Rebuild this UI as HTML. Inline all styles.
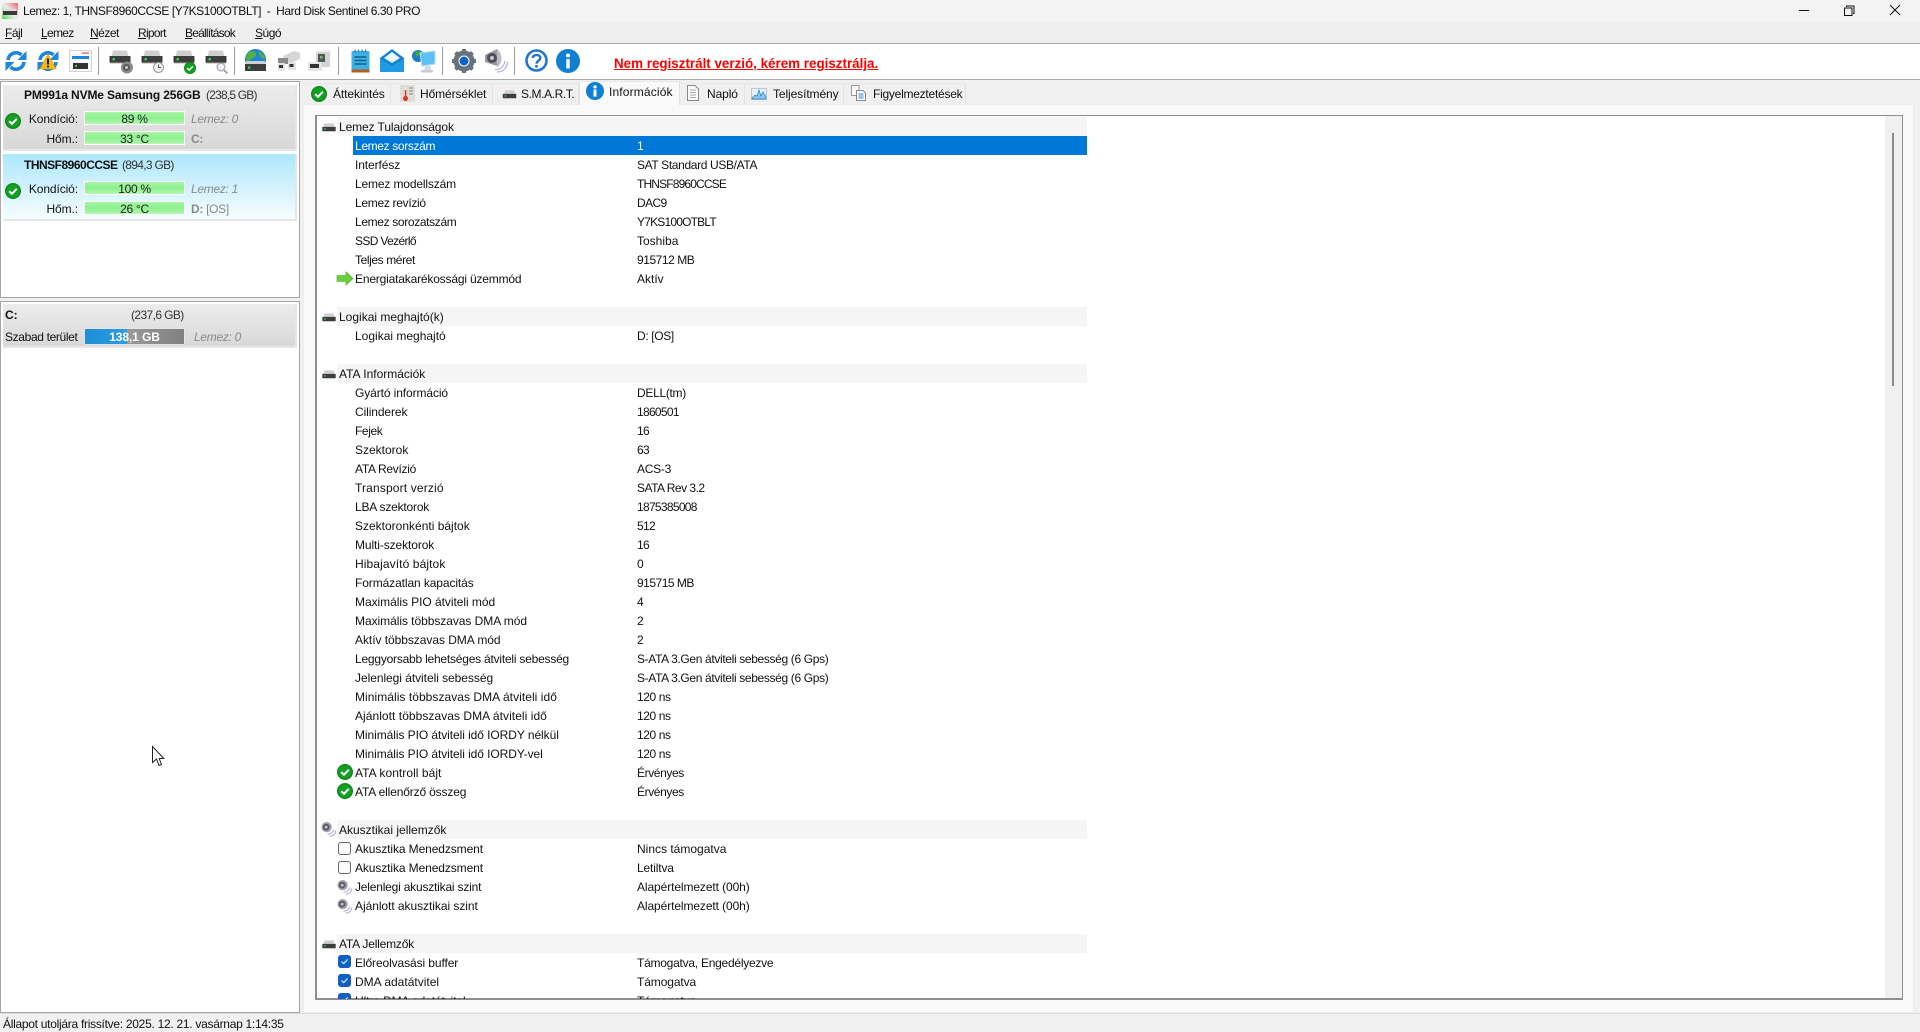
<!DOCTYPE html>
<html lang="hu"><head><meta charset="utf-8"><title>Hard Disk Sentinel</title>
<style>
*{box-sizing:border-box}
html,body{margin:0;padding:0;width:1920px;height:1032px;overflow:hidden;background:#f0f0f0}
body{position:relative;font:12px/21px "Liberation Sans",sans-serif;color:#111;letter-spacing:-.1px}
.a{position:absolute;white-space:nowrap}
svg{position:absolute;overflow:visible}
u{text-decoration:underline}
.m{letter-spacing:-.5px}
.lbl{text-align:right;width:78px;left:0}
.bar{position:absolute;left:85px;width:99px;height:12px;background:linear-gradient(#a8f7a8,#8cf08c 50%,#b6f7b6);outline:1px solid #fff;text-align:center;line-height:14px;color:#222;letter-spacing:-.3px}
.g{color:#8a8a8a;letter-spacing:-.3px}
.tab{position:absolute;top:83px;height:21px;background:#f0f0f0;border-right:1px solid #e2e2e2;border-top:1px solid #e8e8e8}
#t{position:absolute;left:0;top:117px;width:1088px;height:882px;overflow:hidden}
.r{position:relative;height:19px;line-height:21px;white-space:nowrap}
.r b{position:absolute;left:355px;font-weight:normal}
.r i{position:absolute;left:637px;font-style:normal}
.h{position:relative;height:19px;line-height:21px;margin-left:337px;width:750px;background:#f5f5f5}
.h b{position:absolute;left:2px;font-weight:normal}
.s{background:linear-gradient(#0078d7,#0078d7) 353px 0/734px 19px no-repeat;color:#fff}
.cb{position:absolute;left:338px;top:3px;width:13px;height:13px;border-radius:3px;border:1px solid #666;background:#fbfbfb}
.cb.on{top:2px;background:#0f5fc4;border-color:#0f5fc4}
.n{letter-spacing:-.7px}
.c{letter-spacing:-.85px}
.q{letter-spacing:-.35px}
.z{letter-spacing:0}
.y{letter-spacing:.1px}
</style></head><body>
<svg width="0" height="0" style="position:absolute"><defs>
<linearGradient id="ic" x1="1" y1="0" x2="0" y2="1"><stop offset="0" stop-color="#f0626a"/><stop offset=".5" stop-color="#eee"/><stop offset="1" stop-color="#55dd55"/></linearGradient>
<symbol id="hd" viewBox="0 0 22 14"><path d="M2.500 6 4 0.500H18L19.500 6Z" fill="#cfcfcf"/><rect x="0.500" y="6" width="21" height="6.500" fill="#3d3d3d"/><rect x="3.500" y="8" width="2.400" height="2.400" fill="#2fd24a"/><rect x="1" y="12.500" width="20" height="1" fill="#aaa"/></symbol>
<symbol id="ok" viewBox="0 0 16 16"><circle cx="8" cy="8" r="8" fill="#0d8a18"/><circle cx="8" cy="8" r="6.600" fill="#13a024"/><path d="M4.200 8.200 7 10.700 11.800 5.800" fill="none" stroke="#fff" stroke-width="2"/></symbol>
<symbol id="sp" viewBox="0 0 16 16"><circle cx="6" cy="6" r="5.500" fill="#a2a2aa"/><circle cx="5.500" cy="6" r="3.600" fill="#5b5b64"/><circle cx="5.500" cy="6" r="1.500" fill="#c8c8d0"/><path d="M7 13.500C10.500 13.500 13 11.500 13.500 8.500M9.500 15.500C13 15.500 15.300 13 15.800 9.500" fill="none" stroke="#adade0" stroke-width="1.200"/></symbol>
<symbol id="rf" viewBox="0 0 22 22"><path d="M3 10A8 8 0 0 1 16.500 5" fill="none" stroke="#1c86d8" stroke-width="3.600"/><path d="M21.500 1V10H12.500Z" fill="#1c86d8"/><path d="M19 12A8 8 0 0 1 5.500 17" fill="none" stroke="#1c86d8" stroke-width="3.600"/><path d="M0.500 21V12H9.500Z" fill="#1c86d8"/></symbol>
<symbol id="ck" viewBox="0 0 13 13"><path d="M3.500 6.500 5.700 8.600 9.600 4.400" fill="none" stroke="#dbe9ff" stroke-width="1.200"/></symbol>
</defs></svg>

<!-- title bar -->
<div class="a" style="left:0;top:0;width:1920px;height:22px;background:#f3f3f3"></div>
<div class="a" style="left:0;top:22px;width:1920px;height:21px;background:#efefef"></div>
<svg style="left:2px;top:3px" width="16" height="16" viewBox="0 0 16 16"><rect width="16" height="16" fill="url(#ic)"/><rect x="1" y="8" width="14" height="4" fill="#3a3a3a"/><rect x="2" y="6" width="12" height="2" fill="#ddd"/></svg>
<div class="a" style="left:23px;top:1px;letter-spacing:-.43px">Lemez: 1, THNSF8960CCSE [Y7KS100OTBLT] &nbsp;-&nbsp; Hard Disk Sentinel 6.30 PRO</div>
<svg style="left:1799px;top:10px" width="10" height="1"><rect width="10" height="1" fill="#111"/></svg>
<svg style="left:1844px;top:5px" width="11" height="11" viewBox="0 0 11 11"><path d="M2.500 2V1H10V8.500H9M0.500 3H8V10.500H0.500Z" fill="none" stroke="#111"/></svg>
<svg style="left:1890px;top:5px" width="10" height="10" viewBox="0 0 10 10"><path d="M0 0 10 10M10 0 0 10" stroke="#111" stroke-width="1"/></svg>

<!-- menu -->
<div class="a m" style="left:5px;top:23px"><u>F</u>ájl</div>
<div class="a m" style="left:41px;top:23px;letter-spacing:-.7px"><u>L</u>emez</div>
<div class="a m" style="left:90px;top:23px"><u>N</u>ézet</div>
<div class="a m" style="left:138px;top:23px;letter-spacing:-.7px"><u>R</u>iport</div>
<div class="a m" style="left:185px;top:23px;letter-spacing:-.8px"><u>B</u>eállítások</div>
<div class="a m" style="left:255px;top:23px"><u>S</u>úgó</div>

<!-- toolbar -->
<div class="a" style="left:0;top:43px;width:1920px;height:1px;background:#a9a9a9"></div>
<div class="a" style="left:0;top:44px;width:1920px;height:35px;background:#fff"></div>
<div class="a" style="left:0;top:79px;width:1920px;height:1px;background:#a9a9a9"></div>
<div class="a" style="left:98px;top:47px;width:1px;height:28px;background:#9a9a9a"></div>
<div class="a" style="left:234px;top:47px;width:1px;height:28px;background:#9a9a9a"></div>
<div class="a" style="left:338px;top:47px;width:1px;height:28px;background:#9a9a9a"></div>
<div class="a" style="left:442px;top:47px;width:1px;height:28px;background:#9a9a9a"></div>
<div class="a" style="left:514px;top:47px;width:1px;height:28px;background:#9a9a9a"></div>

<svg style="left:5px;top:50px" width="22" height="22"><use href="#rf"/></svg>
<svg style="left:37px;top:50px" width="22" height="22"><use href="#rf"/><path d="M11 4 19 19H3Z" fill="#f8b913" stroke="#e09a00" stroke-width=".6"/><rect x="10" y="8.500" width="2" height="6" fill="#222"/><rect x="10" y="15.500" width="2" height="2" fill="#222"/></svg>
<svg style="left:69px;top:50px" width="23" height="23" viewBox="0 0 23 23"><rect x=".5" y=".5" width="22" height="21" fill="#f8f8f8" stroke="#d4d4d4"/><rect x="3" y="6" width="17" height="3" fill="#1c86d8"/><rect x="13" y="2.500" width="7" height="1.200" fill="#d55"/><rect x="4" y="13" width="15" height="6" fill="#333"/><rect x="6" y="15" width="2" height="2" fill="#2fd24a"/></svg>

<svg style="left:109px;top:50px" width="22" height="14"><use href="#hd"/></svg>
<svg style="left:121px;top:61px" width="12" height="13" viewBox="0 0 12 13"><circle cx="6" cy="6.500" r="6" fill="#8a8a8a"/><circle cx="5.500" cy="6.500" r="3.500" fill="#5a5a5a"/><circle cx="5.500" cy="6.500" r="1.500" fill="#ccc"/></svg>
<svg style="left:141px;top:50px" width="22" height="14"><use href="#hd"/></svg>
<svg style="left:153px;top:62px" width="11" height="11" viewBox="0 0 11 11"><circle cx="5.500" cy="5.500" r="5" fill="#eee" stroke="#999"/><path d="M5.500 2.500V5.500H8" fill="none" stroke="#555"/></svg>
<svg style="left:173px;top:50px" width="22" height="14"><use href="#hd"/></svg>
<svg style="left:184px;top:62px" width="12" height="12"><use href="#ok" width="12" height="12"/></svg>
<svg style="left:205px;top:50px" width="22" height="14"><use href="#hd"/></svg>
<svg style="left:216px;top:62px" width="12" height="12" viewBox="0 0 12 12"><circle cx="5" cy="5" r="3.800" fill="#eef4fa" stroke="#aaa" stroke-width="1.300"/><path d="M8 8 11.500 11.500" stroke="#999" stroke-width="1.600"/></svg>

<svg style="left:244px;top:49px" width="23" height="24" viewBox="0 0 23 24"><circle cx="11.500" cy="10.500" r="10.500" fill="#1f84d8"/><path d="M5 3C9 1 13 3 12 6S7 9 5 12 2 8 2 8ZM14 2C18 3 21 7 21 10L17 9 15 5Z" fill="#54b23a"/><rect x="2" y="12" width="19" height="3.500" fill="#cfcfcf"/><rect x="1" y="15" width="21" height="7" fill="#3d3d3d"/><rect x="4" y="17.500" width="2.400" height="2.400" fill="#2fd24a"/></svg>
<svg style="left:277px;top:50px" width="23" height="22" viewBox="0 0 23 22"><path d="M6 6 17 1 23 3V9L11 14Z" fill="#d5d5d5"/><rect x="1" y="8" width="10" height="6" fill="#8a8a8a"/><rect x="1" y="13" width="7" height="8" fill="#e3e3e3"/><rect x="2" y="15" width="4" height="3" fill="#333"/><rect x="11" y="12" width="8" height="8" fill="#e3e3e3"/><rect x="12.500" y="14" width="4" height="3" fill="#333"/></svg>
<svg style="left:308px;top:50px" width="23" height="22" viewBox="0 0 23 22"><rect x="8" y="2" width="14" height="15" fill="#d2d2d2"/><path d="M8 2 13 0H23V2Z" fill="#eee"/><rect x="10" y="4" width="7" height="8" fill="#555"/><rect x="12" y="6" width="2.500" height="2.500" fill="#4fd060"/><rect x="0" y="12" width="14" height="9" fill="#e5e5e5"/><rect x="2" y="14" width="9" height="4" fill="#333"/></svg>

<svg style="left:351px;top:49px" width="19" height="24" viewBox="0 0 19 24"><rect x="0.500" y="2" width="18" height="19" rx="1" fill="#3db0e4"/><rect x="0.500" y="20.500" width="18" height="3" fill="#b45f1e"/><path d="M4 .5V3.500M7.500 .5V3.500M11 .5V3.500M14.500 .5V3.500" stroke="#2a7cb0" stroke-width="1.200"/><path d="M3.500 8H15.500M3.500 11.500H15.500M3.500 15H15.500" stroke="#12608f" stroke-width="1.600"/></svg>
<svg style="left:380px;top:49px" width="24" height="23" viewBox="0 0 24 23"><path d="M0 9 12 0 24 9V23H0Z" fill="#1383d0"/><path d="M4 9 12 3 20 9 12 14Z" fill="#e9f4fb"/><path d="M0 10 12 17 24 10V23H0Z" fill="#1e9be3"/></svg>
<svg style="left:412px;top:49px" width="24" height="24" viewBox="0 0 24 24"><circle cx="6" cy="7" r="6" fill="#1f78c8"/><path d="M3 3 7 2 8 6 4 8Z" fill="#3fa53a"/><path d="M8 4 23 2V15L10 17Z" fill="#5cc0f2" stroke="#bcd9ea"/><path d="M13 17 18 16 19 21H12Z" fill="#d5dbe4"/><rect x="9" y="21" width="12" height="2.500" rx="1" fill="#c5ccd6"/></svg>

<svg style="left:452px;top:49px" width="24" height="24" viewBox="0 0 24 24"><circle cx="12" cy="12" r="8" fill="none" stroke="#68727d" stroke-width="5"/><path d="M12 0V24M0 12H24M3.500 3.500 20.500 20.500M20.500 3.500 3.500 20.500" stroke="#68727d" stroke-width="4" stroke-dasharray="4 16 4 0"/><circle cx="12" cy="12" r="4.500" fill="#0f62c4"/></svg>
<svg style="left:484px;top:49px" width="24" height="24" viewBox="0 0 24 24"><path d="M1 6 13 0V17L1 13Z" fill="#97979f"/><circle cx="8" cy="9" r="5" fill="#4d4d55"/><circle cx="8" cy="9" r="2" fill="#c8c8d0"/><path d="M13 0C19 4 19 15 13 18" fill="#bdbdc6"/><path d="M11 20.500C16 21 20 18 21 12M13 23C19 23 23 19 23.500 13" fill="none" stroke="#b0b0de" stroke-width="1.200"/></svg>

<svg style="left:525px;top:49px" width="23" height="23" viewBox="0 0 23 23"><circle cx="11.500" cy="11.500" r="10" fill="#fff" stroke="#2077cf" stroke-width="2.600"/><path d="M7.800 9C7.800 5 15.300 5 15.300 9 15.300 12 11.500 11.500 11.500 14.800" fill="none" stroke="#2077cf" stroke-width="2.400"/><rect x="10.200" y="16" width="2.600" height="2.600" fill="#2077cf"/></svg>
<svg style="left:556px;top:49px" width="24" height="24" viewBox="0 0 24 24"><circle cx="12" cy="12" r="12" fill="#0f7fd2"/><circle cx="12" cy="6.500" r="2" fill="#fff"/><rect x="10.300" y="10" width="3.400" height="9.500" fill="#fff"/></svg>

<div class="a" style="left:614px;top:54px;font:bold 13.4px/20px 'Liberation Sans',sans-serif;letter-spacing:0;color:#f00;text-decoration:underline">Nem regisztrált verzió, kérem regisztrálja.</div>

<!-- left panels -->
<div class="a" style="left:0;top:81px;width:300px;height:217px;background:#fff;border:1px solid #a6a6a6"></div>
<div class="a" style="left:3px;top:85px;width:294px;height:66px;background:linear-gradient(#ececec,#d8d8d8);border-right:2px solid #e6e6e6;border-bottom:2px solid #e6e6e6"></div>
<div class="a" style="left:3px;top:154px;width:294px;height:67px;background:linear-gradient(#ace7fb,#d8f4fd 60%,#f6fdff);border-right:2px solid #e6e6e6;border-bottom:2px solid #e6e6e6"></div>

<div class="a" style="left:24px;top:85px;letter-spacing:-.14px"><span style="font-weight:bold">PM991a NVMe Samsung 256GB</span></div>
<div class="a" style="left:206px;top:85px;color:#333;letter-spacing:-.8px">(238,5 GB)</div>
<svg style="left:5px;top:113px" width="16" height="16"><use href="#ok"/></svg>
<div class="a lbl" style="top:109px">Kondíció:</div>
<div class="a lbl" style="top:129px">Hőm.:</div>
<div class="bar" style="top:112px">89 %</div>
<div class="bar" style="top:132px">33 °C</div>
<div class="a g" style="left:191px;top:109px;font-style:italic">Lemez: 0</div>
<div class="a g" style="left:191px;top:129px;font-weight:bold">C:</div>

<div class="a" style="left:24px;top:155px;letter-spacing:-.5px"><span style="font-weight:bold">THNSF8960CCSE</span></div>
<div class="a" style="left:122px;top:155px;color:#333;letter-spacing:-.7px">(894,3 GB)</div>
<svg style="left:5px;top:183px" width="16" height="16"><use href="#ok"/></svg>
<div class="a lbl" style="top:179px">Kondíció:</div>
<div class="a lbl" style="top:199px">Hőm.:</div>
<div class="bar" style="top:182px">100 %</div>
<div class="bar" style="top:202px">26 °C</div>
<div class="a g" style="left:191px;top:179px;font-style:italic">Lemez: 1</div>
<div class="a g" style="left:191px;top:199px"><b>D:</b> [OS]</div>

<div class="a" style="left:0;top:301px;width:300px;height:712px;background:#fff;border:1px solid #a6a6a6"></div>
<div class="a" style="left:3px;top:304px;width:294px;height:44px;background:linear-gradient(#ececec,#d8d8d8);border-right:2px solid #e6e6e6;border-bottom:2px solid #e6e6e6"></div>
<div class="a" style="left:5px;top:305px;font-weight:bold">C:</div>
<div class="a" style="left:131px;top:305px;color:#333;letter-spacing:-.6px">(237,6 GB)</div>
<div class="a" style="left:5px;top:327px;letter-spacing:-.35px">Szabad terület</div>
<div class="a" style="left:85px;top:329px;width:99px;height:15px;background:linear-gradient(90deg,#1c8fd8 0,#2e9cdf 42px,#9a9a9a 42px,#808080);outline:1px solid #e5e5e5;text-align:center;color:#fff;font-weight:bold;line-height:16px">138,1 GB</div>
<div class="a g" style="left:194px;top:327px;font-style:italic">Lemez: 0</div>

<!-- right area -->
<div class="a" style="left:303px;top:104px;width:1611px;height:909px;background:#f9f9f9;border:1px solid #ececec"></div>
<div class="tab" style="left:306px;width:85px"></div>
<div class="tab" style="left:391px;width:102px"></div>
<div class="tab" style="left:493px;width:86px"></div>
<div class="tab" style="left:579px;top:81px;height:24px;width:101px;background:#f9f9f9;border-left:1px solid #e2e2e2"></div>
<div class="tab" style="left:680px;width:65px"></div>
<div class="tab" style="left:745px;width:99px"></div>
<div class="tab" style="left:844px;width:122px"></div>

<svg style="left:311px;top:86px" width="16" height="16"><use href="#ok"/></svg>
<div class="a" style="left:333px;top:84px">Áttekintés</div>
<svg style="left:400px;top:85px" width="15" height="17" viewBox="0 0 15 17"><rect width="15" height="17" fill="#e0dcd6"/><rect x="4" y="1" width="3" height="11" rx="1.500" fill="#f4f4f4" stroke="#bbb" stroke-width=".5"/><rect x="4.800" y="5" width="1.500" height="8" fill="#d8352a"/><circle cx="5.500" cy="13.500" r="2.500" fill="#d8352a"/><path d="M9 3H13M9 6H13M9 9H13" stroke="#888"/></svg>
<div class="a" style="left:420px;top:84px">Hőmérséklet</div>
<svg style="left:501px;top:90px" width="17" height="9" viewBox="0 0 22 14"><use href="#hd" width="22" height="14"/></svg>
<div class="a" style="left:521px;top:84px;letter-spacing:-.4px">S.M.A.R.T.</div>
<svg style="left:586px;top:82px" width="18" height="18" viewBox="0 0 24 24"><circle cx="12" cy="12" r="12" fill="#0f7fd2"/><circle cx="12" cy="6.500" r="2.200" fill="#fff"/><rect x="10" y="10" width="4" height="9.500" fill="#fff"/></svg>
<div class="a" style="left:609px;top:82px;letter-spacing:.15px">Információk</div>
<svg style="left:687px;top:85px" width="12" height="16" viewBox="0 0 12 16"><path d="M.5 .5H8L11.500 4V15.500H.5Z" fill="#fafafa" stroke="#888"/><path d="M3 5H9M3 7.500H9M3 10H9M3 12.500H9" stroke="#aaa"/></svg>
<div class="a" style="left:707px;top:84px">Napló</div>
<svg style="left:751px;top:88px" width="16" height="12" viewBox="0 0 16 12"><rect x=".5" y=".5" width="15" height="11" fill="#e6f1fb" stroke="#b7c7d6"/><path d="M1 10 4 7 6 8 8 2 10 8 12 4 15 9V11H1Z" fill="#8cc4ee" stroke="#2b7fc8" stroke-width=".7"/></svg>
<div class="a" style="left:773px;top:84px">Teljesítmény</div>
<svg style="left:851px;top:85px" width="15" height="16" viewBox="0 0 15 16"><path d="M.5 .5H8V10.500H.5Z" fill="#fafafa" stroke="#999"/><path d="M5.500 5.500H12L14.500 8V15.500H5.500Z" fill="#fdfdfd" stroke="#888"/><path d="M7.500 9H12.500M7.500 11H12.500M7.500 13H12.500" stroke="#3c86d0"/></svg>
<div class="a" style="left:873px;top:84px;letter-spacing:-.25px">Figyelmeztetések</div>

<div class="a" style="left:315px;top:115px;width:1588px;height:885px;background:#fff;border:1px solid #8f8f8f;border-width:1px 2px 2px 2px"></div>
<div class="a" style="left:1885px;top:116px;width:17px;height:882px;background:#f0f0f0"></div>
<div class="a" style="left:1892px;top:133px;width:2px;height:253px;background:#8c8c8c"></div>

<svg style="left:322px;top:123px" width="14" height="9" viewBox="0 0 22 14"><use href="#hd" width="22" height="14"/></svg>
<svg style="left:322px;top:313px" width="14" height="9" viewBox="0 0 22 14"><use href="#hd" width="22" height="14"/></svg>
<svg style="left:322px;top:370px" width="14" height="9" viewBox="0 0 22 14"><use href="#hd" width="22" height="14"/></svg>
<svg style="left:321px;top:821px" width="15" height="16"><use href="#sp" width="15" height="16"/></svg>
<svg style="left:322px;top:940px" width="14" height="9" viewBox="0 0 22 14"><use href="#hd" width="22" height="14"/></svg>

<div id="t">
<div class="h"><b>Lemez Tulajdonságok</b></div>
<div class="r s"><b class="q">Lemez sorszám</b><i>1</i></div>
<div class="r"><b>Interfész</b><i class="q">SAT Standard USB/ATA</i></div>
<div class="r"><b style="letter-spacing:-.15px">Lemez modellszám</b><i class="c">THNSF8960CCSE</i></div>
<div class="r"><b style="letter-spacing:-.3px">Lemez revízió</b><i style="letter-spacing:-.6px">DAC9</i></div>
<div class="r"><b class="q">Lemez sorozatszám</b><i style="letter-spacing:-.8px">Y7KS100OTBLT</i></div>
<div class="r"><b style="letter-spacing:-.65px">SSD Vezérlő</b><i class="z">Toshiba</i></div>
<div class="r"><b style="letter-spacing:-.4px">Teljes méret</b><i style="letter-spacing:-.45px">915712 MB</i></div>
<div class="r"><svg style="left:337px;top:3px" width="16" height="13" viewBox="0 0 16 13"><path d="M0 3.500H9V0L16 6.500 9 13V9.500H0Z" fill="#6ccf3a" stroke="#4aa828" stroke-width=".6"/></svg><b style="letter-spacing:-.18px">Energiatakarékossági üzemmód</b><i class="z">Aktív</i></div>
<div class="r"></div>
<div class="h"><b class="z">Logikai meghajtó(k)</b></div>
<div class="r"><b class="z">Logikai meghajtó</b><i class="q">D: [OS]</i></div>
<div class="r"></div>
<div class="h"><b class="z">ATA Információk</b></div>
<div class="r"><b>Gyártó információ</b><i style="letter-spacing:-.3px">DELL(tm)</i></div>
<div class="r"><b>Cilinderek</b><i class="n">1860501</i></div>
<div class="r"><b style="letter-spacing:-.4px">Fejek</b><i class="n">16</i></div>
<div class="r"><b class="z">Szektorok</b><i class="n">63</i></div>
<div class="r"><b style="letter-spacing:-.3px">ATA Revízió</b><i style="letter-spacing:-.25px">ACS-3</i></div>
<div class="r"><b style="letter-spacing:.15px">Transport verzió</b><i style="letter-spacing:-.5px">SATA Rev 3.2</i></div>
<div class="r"><b style="letter-spacing:-.2px">LBA szektorok</b><i class="n">1875385008</i></div>
<div class="r"><b class="z">Szektoronkénti bájtok</b><i class="n">512</i></div>
<div class="r"><b>Multi-szektorok</b><i class="n">16</i></div>
<div class="r"><b class="y">Hibajavító bájtok</b><i>0</i></div>
<div class="r"><b>Formázatlan kapacitás</b><i style="letter-spacing:-.5px">915715 MB</i></div>
<div class="r"><b style="letter-spacing:-.05px">Maximális PIO átviteli mód</b><i>4</i></div>
<div class="r"><b style="letter-spacing:-.05px">Maximális többszavas DMA mód</b><i>2</i></div>
<div class="r"><b style="letter-spacing:-.05px">Aktív többszavas DMA mód</b><i>2</i></div>
<div class="r"><b style="letter-spacing:-.22px">Leggyorsabb lehetséges átviteli sebesség</b><i class="q">S-ATA 3.Gen átviteli sebesség (6 Gps)</i></div>
<div class="r"><b style="letter-spacing:-.05px">Jelenlegi átviteli sebesség</b><i class="q">S-ATA 3.Gen átviteli sebesség (6 Gps)</i></div>
<div class="r"><b style="letter-spacing:.05px">Minimális többszavas DMA átviteli idő</b><i style="letter-spacing:-.4px">120 ns</i></div>
<div class="r"><b style="letter-spacing:.05px">Ajánlott többszavas DMA átviteli idő</b><i style="letter-spacing:-.4px">120 ns</i></div>
<div class="r"><b style="letter-spacing:-.07px">Minimális PIO átviteli idő IORDY nélkül</b><i style="letter-spacing:-.4px">120 ns</i></div>
<div class="r"><b style="letter-spacing:-.07px">Minimális PIO átviteli idő IORDY-vel</b><i style="letter-spacing:-.4px">120 ns</i></div>
<div class="r"><svg style="left:337px;top:1px" width="16" height="16"><use href="#ok"/></svg><b style="letter-spacing:.05px">ATA kontroll bájt</b><i style="letter-spacing:-.4px">Érvényes</i></div>
<div class="r"><svg style="left:337px;top:1px" width="16" height="16"><use href="#ok"/></svg><b style="letter-spacing:-.15px">ATA ellenőrző összeg</b><i style="letter-spacing:-.4px">Érvényes</i></div>
<div class="r"></div>
<div class="h"><b class="z">Akusztikai jellemzők</b></div>
<div class="r"><span class="cb"></span><b>Akusztika Menedzsment</b><i class="z">Nincs támogatva</i></div>
<div class="r"><span class="cb"></span><b>Akusztika Menedzsment</b><i style="letter-spacing:-.15px">Letiltva</i></div>
<div class="r"><svg style="left:337px;top:2px" width="15" height="16"><use href="#sp" width="15" height="16"/></svg><b style="letter-spacing:-.2px">Jelenlegi akusztikai szint</b><i>Alapértelmezett (00h)</i></div>
<div class="r"><svg style="left:337px;top:2px" width="15" height="16"><use href="#sp" width="15" height="16"/></svg><b style="letter-spacing:-.05px">Ajánlott akusztikai szint</b><i>Alapértelmezett (00h)</i></div>
<div class="r"></div>
<div class="h"><b style="letter-spacing:-.2px">ATA Jellemzők</b></div>
<div class="r"><span class="cb on"><svg style="left:-1px;top:-1px" width="13" height="13"><use href="#ck"/></svg></span><b>Előreolvasási buffer</b><i style="letter-spacing:-.25px">Támogatva, Engedélyezve</i></div>
<div class="r"><span class="cb on"><svg style="left:-1px;top:-1px" width="13" height="13"><use href="#ck"/></svg></span><b class="z">DMA adatátvitel</b><i>Támogatva</i></div>
<div class="r"><span class="cb on"><svg style="left:-1px;top:-1px" width="13" height="13"><use href="#ck"/></svg></span><b>Ultra DMA adatátvitel</b><i>Támogatva</i></div>
</div>

<!-- status -->
<div class="a" style="left:0;top:1013px;width:1920px;height:19px;background:#f0f0f0;border-top:1px solid #dcdcdc"></div>
<div class="a" style="left:3px;top:1014px;letter-spacing:-.28px">Állapot utoljára frissítve: 2025. 12. 21. vasárnap 1:14:35</div>

<!-- cursor -->
<svg style="left:152px;top:746px" width="12" height="21" viewBox="0 0 12 21"><path d="M.5 .5V16.500L4.500 13 7 19.500 9.500 18.500 7.200 12.500H11.800Z" fill="#fff" stroke="#222" stroke-width="1"/></svg>
</body></html>
